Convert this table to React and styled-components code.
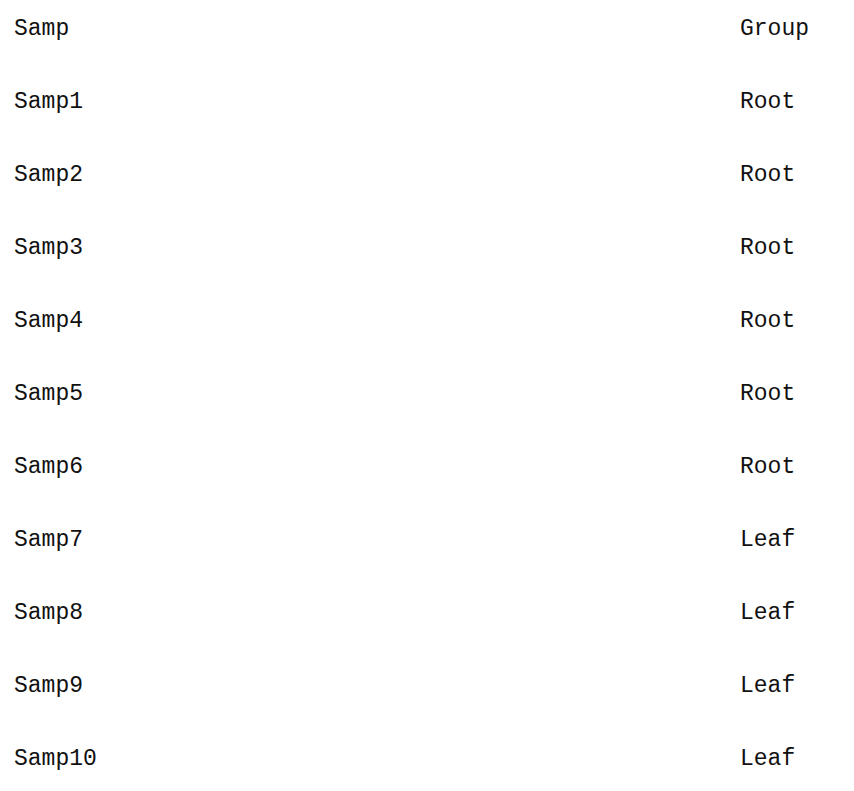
import React from 'react'
import styled, { createGlobalStyle } from 'styled-components'

const GlobalStyle = createGlobalStyle`
body {
  margin: 0;
  background: #ffffff;
}
`

const Table = styled.div`
display: grid;
grid-template-columns: 726px 1fr;
row-gap: 49px;
padding: 17px 0 0 14px;
font-family: "Liberation Mono", "DejaVu Sans Mono", monospace;
font-size: 23px;
line-height: 24px;
color: #111111;
`

const Cell = styled.div`
white-space: nowrap;
`

const rows = [
  ['Samp', 'Group'],
  ['Samp1', 'Root'],
  ['Samp2', 'Root'],
  ['Samp3', 'Root'],
  ['Samp4', 'Root'],
  ['Samp5', 'Root'],
  ['Samp6', 'Root'],
  ['Samp7', 'Leaf'],
  ['Samp8', 'Leaf'],
  ['Samp9', 'Leaf'],
  ['Samp10', 'Leaf']
]

export default function App() {
  return (
    <>
      <GlobalStyle />
      <Table>
        {rows.map(([samp, group]) => (
          <React.Fragment key={samp}>
            <Cell>{samp}</Cell>
            <Cell>{group}</Cell>
          </React.Fragment>
        ))}
      </Table>
    </>
  )
}
